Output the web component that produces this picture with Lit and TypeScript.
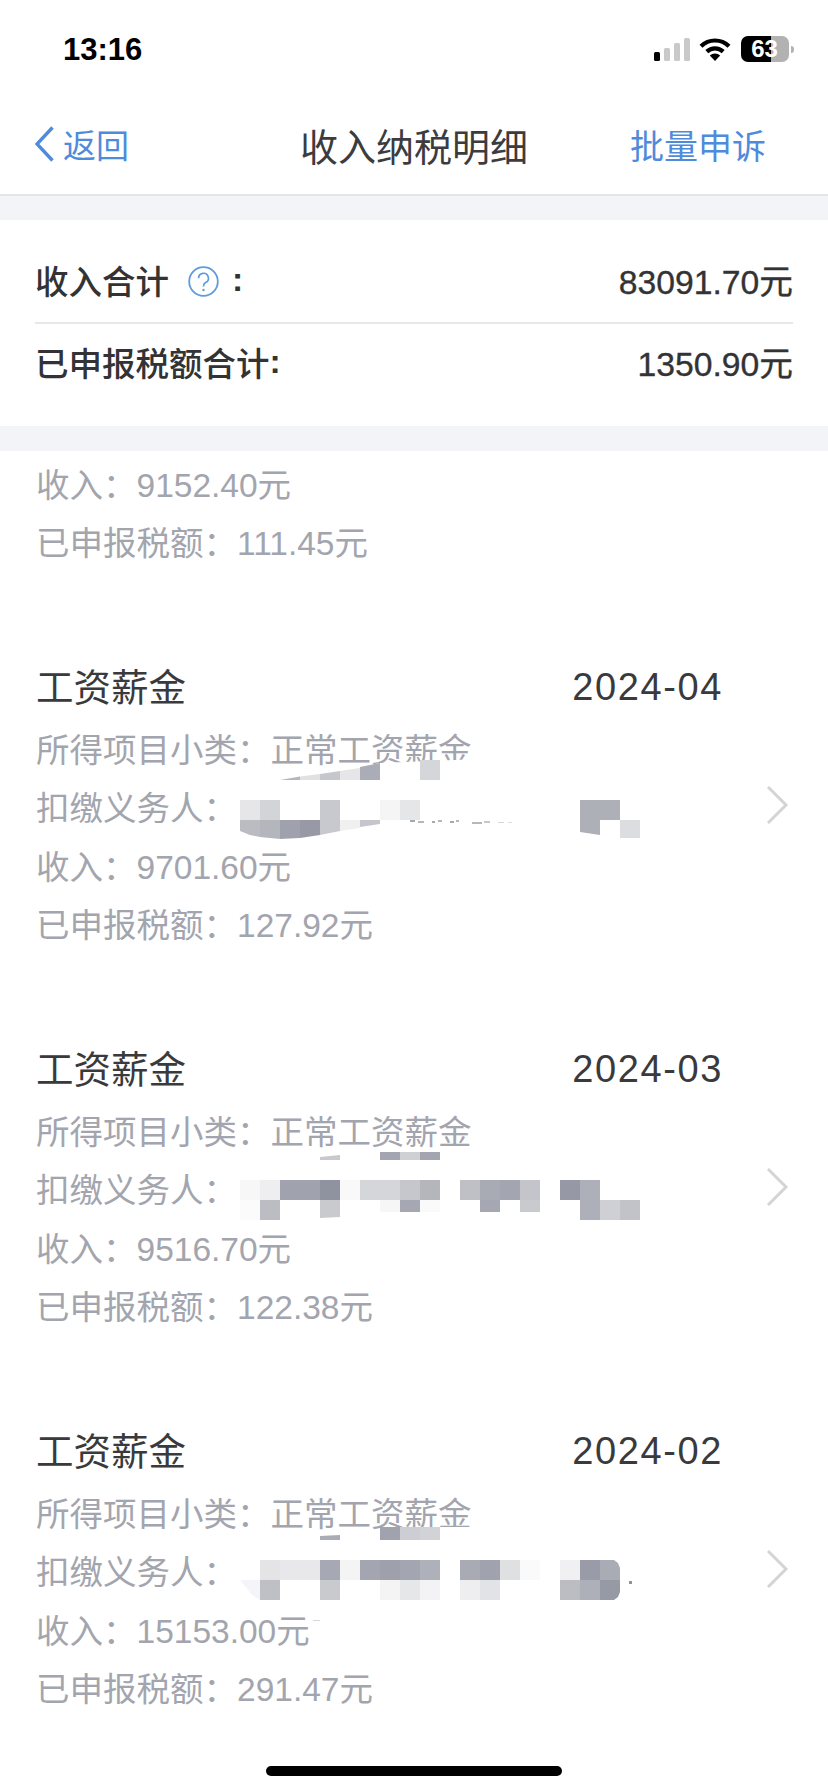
import { LitElement, html, css, svg } from "lit";
import { customElement } from "lit/decorators.js";

type Rect = [number, number, number, number, string];
type Poly = [string, string];
interface Mosaic { polysBelow?: Poly[]; rects: Rect[]; polys: Poly[]; }
interface Entry { date: string; income: string; tax: string; top: number; mosaic: Mosaic; }

const row = (y: number, h: number, cells: [number, string][]): Rect[] =>
  cells.map(([x, c]) => [x, y, 20, h, c] as Rect);

const ENTRIES: Entry[] = [
  {
    date: "2024-04", income: "9701.60元", tax: "127.92元", top: 572,
    mosaic: {
      polysBelow: [["340,771 380,763 480,759 480,782 340,782", "#fff"]],
      rects: [
        ...row(760, 20, [[420, "#d5d6da"]]),
        ...row(800, 20, [[240, "#e6e6e8"], [260, "#d3d4d7"], [320, "#c8c9ce"], [380, "#f5f5f6"], [400, "#e5e6e8"], [580, "#aeb0b8"], [600, "#aeb0b8"]]),
        [620, 820, 20, 18, "#dcdde0"],
        [410, 820, 5, 2, "#a6a8b2"], [418, 821, 6, 2, "#b5b7bf"], [432, 821, 3, 2, "#a6a8b2"], [438, 820, 4, 2, "#b5b7bf"],
        [450, 821, 4, 2, "#a6a8b2"], [456, 820, 3, 2, "#b5b7bf"], [472, 822, 10, 2, "#b5b7bf"], [484, 821, 6, 2, "#c6c7cd"],
        [498, 822, 6, 1, "#d5d6da"], [508, 822, 4, 1, "#dcdde0"],
      ],
      polys: [
        ["280,780 300,776.5 300,780", "#b5b6bc"],
        ["300,776.5 320,774 320,780 300,780", "#e0e1e3"],
        ["320,774 340,771 340,780 320,780", "#c6c7cc"],
        ["340,771 360,768 360,780 340,780", "#e6e6e8"],
        ["360,767 380,763 380,780 360,780", "#aaacb6"],
        ["240,820 260,820 260,837 250,835 240,831", "#babcc2"],
        ["260,820 280,820 280,839 260,837", "#b4b6bd"],
        ["280,820 300,820 300,838 280,839", "#9fa2ad"],
        ["300,820 320,820 320,835 300,838", "#979aa6"],
        ["320,820 340,820 340,831 320,835", "#c8c9ce"],
        ["340,820 360,820 360,828 340,831", "#f0f0f1"],
        ["360,820 380,820 380,824 360,827", "#c5c6cb"],
        ["580,820 600,820 600,835 580,832", "#aeb0b8"],
      ],
    },
  },
  {
    date: "2024-03", income: "9516.70元", tax: "122.38元", top: 954,
    mosaic: {
      rects: [
        ...row(1152, 8, [[380, "#a3a5b0"], [400, "#ced0d4"], [420, "#a3a5b0"]]),
        ...row(1180, 20, [[240, "#f7f7f8"], [260, "#eeeef0"], [280, "#a0a3ae"], [300, "#a0a3ae"], [320, "#8f939f"], [340, "#f9f9fa"], [360, "#d5d6da"], [380, "#d5d6da"], [400, "#c6c7cc"], [420, "#b5b6bc"], [460, "#bfc0c6"], [480, "#a8aab4"], [500, "#a3a6b1"], [520, "#c4c5ca"], [560, "#9699a5"], [580, "#adb0b9"]]),
        ...row(1200, 20, [[240, "#fbfbfb"], [260, "#bcbdc3"], [580, "#adb0b9"], [600, "#cfd0d4"], [620, "#c2c3c8"]]),
        ...row(1200, 12, [[380, "#f6f6f7"], [400, "#a5a7b2"], [420, "#fafafa"], [480, "#a5a7b2"]]),
      ],
      polys: [
        ["320,1157 340,1155 340,1160 320,1160", "#c8c9ce"],
        ["320,1200 340,1200 340,1217 320,1218", "#c9cace"],
        ["520,1200 540,1200 540,1212 520,1212", "#c9cace"],
      ],
    },
  },
  {
    date: "2024-02", income: "15153.00元", tax: "291.47元", top: 1336,
    mosaic: {
      polysBelow: [["380,1527 470,1527 470,1541 380,1541", "#fff"]],
      rects: [
        ...row(1527, 13, [[380, "#a0a2ad"], [400, "#cdced3"], [420, "#d2d3d6"]]),
        ...row(1560, 20, [[260, "#e4e4e6"], [280, "#e8e8ea"], [300, "#e8e8ea"], [320, "#a6a8b3"], [340, "#f4f4f5"], [360, "#a3a5b0"], [380, "#9ea1ac"], [400, "#a3a6b1"], [420, "#aeb0ba"], [460, "#a8aab4"], [480, "#a0a3ae"], [500, "#dfe0e2"], [520, "#fafafa"], [560, "#f0f0f2"], [580, "#999ca8"]]),
        ...row(1580, 20, [[260, "#bfc0c6"], [320, "#c9cace"], [380, "#f4f4f5"], [400, "#e6e7e9"], [420, "#f3f3f5"], [460, "#eeeef0"], [480, "#e2e3e6"], [560, "#bcbdc3"], [580, "#aeb0b9"]]),
        [629, 1581, 3, 3, "#8f929c"],
        [313, 1620, 7, 1, "#d8d8dc"],
      ],
      polys: [
        ["320,1536 340,1535 340,1540 320,1540", "#a9abb5"],
        ["240,1580 260,1580 260,1600 252,1595", "#f5f5f9"],
        ["600,1560 614,1560 618,1563 620,1568 620,1580 600,1580", "#a9abb5"],
        ["600,1580 620,1580 620,1592 618,1597 614,1600 600,1600", "#969aa5"],
      ],
    },
  },
];

@customElement("app-root")
export class AppRoot extends LitElement {
  static styles = css`
    :host {
      display: flex;
      flex-direction: column;
      min-height: 1792px;
      background: #fff;
      font-family: "Liberation Sans", "Noto Sans CJK SC", sans-serif;
      color: #3a3a3c;
    }
    .status {
      height: 96px;
      display: flex;
      align-items: flex-start;
      justify-content: space-between;
      box-sizing: border-box;
      padding: 37px 34px 0 63px;
    }
    .time {
      font-size: 31px;
      line-height: 26px;
      font-weight: 700;
      color: #000;
    }
    .indicators {
      display: flex;
      align-items: flex-start;
      margin-top: -1px;
    }
    .signal { display: block; margin-top: 2px; margin-right: 9px; }
    .wifi { display: block; margin-top: 1px; margin-right: 10px; }
    .battery {
      width: 48px;
      height: 26px;
      border-radius: 7px;
      background: linear-gradient(to right, #000 0, #000 30px, #b2b2b2 30px, #b2b2b2 100%);
      color: #fff;
      font-size: 24px;
      font-weight: 700;
      line-height: 26px;
      text-align: center;
      padding-right: 1px;
      box-sizing: border-box;
    }
    .cap {
      width: 3px;
      height: 7px;
      margin: 10px 0 0 2px;
      border-radius: 0 3px 3px 0;
      background: #b2b2b2;
    }
    .nav {
      height: 100px;
      padding-bottom: 2px;
      display: grid;
      grid-template-columns: 1fr auto 1fr;
      align-items: center;
      box-sizing: border-box;
      padding-left: 35px;
      padding-right: 35px;
      border-bottom: 2px solid #e4e4e6;
    }
    .back {
      display: flex;
      align-items: center;
      gap: 9px;
      font-size: 33px;
      color: #4f8bdb;
    }
    .back svg { display: block; }
    .nav-title {
      font-size: 38px;
      color: #3c3c3e;
    }
    .action {
      justify-self: end;
      margin-right: 27px;
      font-size: 34px;
      color: #4f8bdb;
    }
    .band { height: 25px; background: #f3f4f8; }
    .band.first { height: 24px; }
    .summary {
      height: 206px;
      box-sizing: border-box;
      padding: 20px 35px 0 35px;
      font-size: 33.5px;
      font-weight: 500;
      color: #333335;
    }
    .sum-row {
      display: flex;
      align-items: center;
      justify-content: space-between;
      height: 82px;
    }
    .sum-row + .sum-row {
      height: 78px;
      border-top: 2px solid #e8e8ea;
    }
    .sum-label {
      display: flex;
      align-items: center;
    }
    .sum-text { margin-bottom: 4px; }
    .help {
      display: block;
      margin-left: 19px;
      margin-right: 13px;
    }
    .colon {
      font-family: "Liberation Sans", sans-serif;
      font-weight: 700;
      margin-bottom: 2px;
    }
    .num {
      font-size: 33.7px;
      font-weight: 400;
      margin-bottom: 4px;
      -webkit-text-stroke: 0.35px #333335;
    }
    .list {
      display: flex;
      flex-direction: column;
      padding-left: 36px;
      padding-right: 38px;
    }
    .partial { padding-top: 5.5px; }
    .line {
      height: 58.5px;
      line-height: 58.5px;
      font-size: 33.5px;
      color: #a3a5ae;
      white-space: nowrap;
    }
    .item {
      display: flex;
      align-items: center;
      padding-top: 84px;
    }
    .item-body { flex: 1; min-width: 0; }
    .title-row {
      height: 60px;
      margin-bottom: 4px;
      display: flex;
      align-items: center;
      justify-content: space-between;
      padding-right: 43px;
    }
    .item-title { font-size: 37.5px; color: #3a3a3c; margin-bottom: 6px; }
    .date { font-size: 38px; letter-spacing: 1.6px; color: #3a3a3c; }
    .chevron { display: block; flex: none; margin-bottom: 4px; }
    .mosaic {
      position: absolute;
      left: 0;
      display: block;
      pointer-events: none;
    }
    .home {
      width: 296px;
      height: 10px;
      border-radius: 5px;
      background: #000;
      margin: auto auto 16px 266px;
    }
  `;

  private renderMosaic(m: Mosaic, top: number) {
    return html`<svg class="mosaic" style="top:${top}px" width="828" height="382" viewBox="0 ${top} 828 382">
      ${(m.polysBelow ?? []).map(([p, c]) => svg`<polygon points=${p} fill=${c}></polygon>`)}
      ${m.rects.map(([x, y, w, h, c]) => svg`<rect x=${x} y=${y} width=${w} height=${h} fill=${c}></rect>`)}
      ${m.polys.map(([p, c]) => svg`<polygon points=${p} fill=${c}></polygon>`)}
    </svg>`;
  }

  render() {
    return html`
      <div class="status">
        <div class="time">13:16</div>
        <div class="indicators">
          <svg class="signal" width="36" height="23" viewBox="0 0 36 23">
            <rect x="0" y="14" width="6" height="9" rx="1.5" fill="#000"></rect>
            <rect x="10" y="10" width="6" height="13" rx="1.5" fill="#c9c9c9"></rect>
            <rect x="20" y="5" width="6" height="18" rx="1.5" fill="#c9c9c9"></rect>
            <rect x="30" y="0" width="6" height="23" rx="1.5" fill="#c9c9c9"></rect>
          </svg>
          <svg class="wifi" width="32" height="24" viewBox="0 0 32 24">
            <path d="M2 9.2 A20 20 0 0 1 30 9.2" fill="none" stroke="#000" stroke-width="4.2"></path>
            <path d="M7.8 14.6 A12 12 0 0 1 24.2 14.6" fill="none" stroke="#000" stroke-width="4.2"></path>
            <path d="M16 24 L10.8 18.6 A7.4 7.4 0 0 1 21.2 18.6 Z" fill="#000"></path>
          </svg>
          <div class="battery">63</div>
          <div class="cap"></div>
        </div>
      </div>

      <div class="nav">
        <div class="back">
          <svg width="19" height="36" viewBox="0 0 19 36">
            <path d="M17.5 1.5 L2 18 L17.5 34.5" fill="none" stroke="#4f8bdb" stroke-width="3.4"></path>
          </svg>
          <span>返回</span>
        </div>
        <div class="nav-title">收入纳税明细</div>
        <div class="action">批量申诉</div>
      </div>
      <div class="band first"></div>

      <div class="summary">
        <div class="sum-row">
          <div class="sum-label">
            <span class="sum-text">收入合计</span>
            <svg class="help" width="31" height="31" viewBox="0 0 31 31">
              <circle cx="15.5" cy="15.5" r="14.3" fill="none" stroke="#5f9be0" stroke-width="1.8"></circle>
              <path d="M10.6 12.2 A4.9 4.9 0 1 1 17.6 16.6 C15.9 17.5 15.5 18.4 15.5 20.4" fill="none" stroke="#5f9be0" stroke-width="1.7"></path>
              <circle cx="15.5" cy="24" r="1.2" fill="#5f9be0"></circle>
            </svg>
            <span class="colon">:</span>
          </div>
          <div class="num">83091.70元</div>
        </div>
        <div class="sum-row">
          <div class="sum-label"><span class="sum-text">已申报税额合计</span><span class="colon">:</span></div>
          <div class="num">1350.90元</div>
        </div>
      </div>
      <div class="band"></div>

      <div class="list">
        <div class="partial">
          <div class="line">收入：9152.40元</div>
          <div class="line">已申报税额：111.45元</div>
        </div>
        ${ENTRIES.map(
          (e) => html`
            <div class="item">
              <div class="item-body">
                <div class="title-row">
                  <span class="item-title">工资薪金</span>
                  <span class="date">${e.date}</span>
                </div>
                <div class="line">所得项目小类：正常工资薪金</div>
                <div class="line">扣缴义务人：</div>
                <div class="line">收入：${e.income}</div>
                <div class="line">已申报税额：${e.tax}</div>
              </div>
              <svg class="chevron" width="24" height="40" viewBox="0 0 24 40">
                <path d="M2 2 L20 20 L2 38" fill="none" stroke="#d4d4d6" stroke-width="3"></path>
              </svg>
            </div>
            ${this.renderMosaic(e.mosaic, e.top)}
          `
        )}
      </div>
      <div class="home"></div>
    `;
  }
}
